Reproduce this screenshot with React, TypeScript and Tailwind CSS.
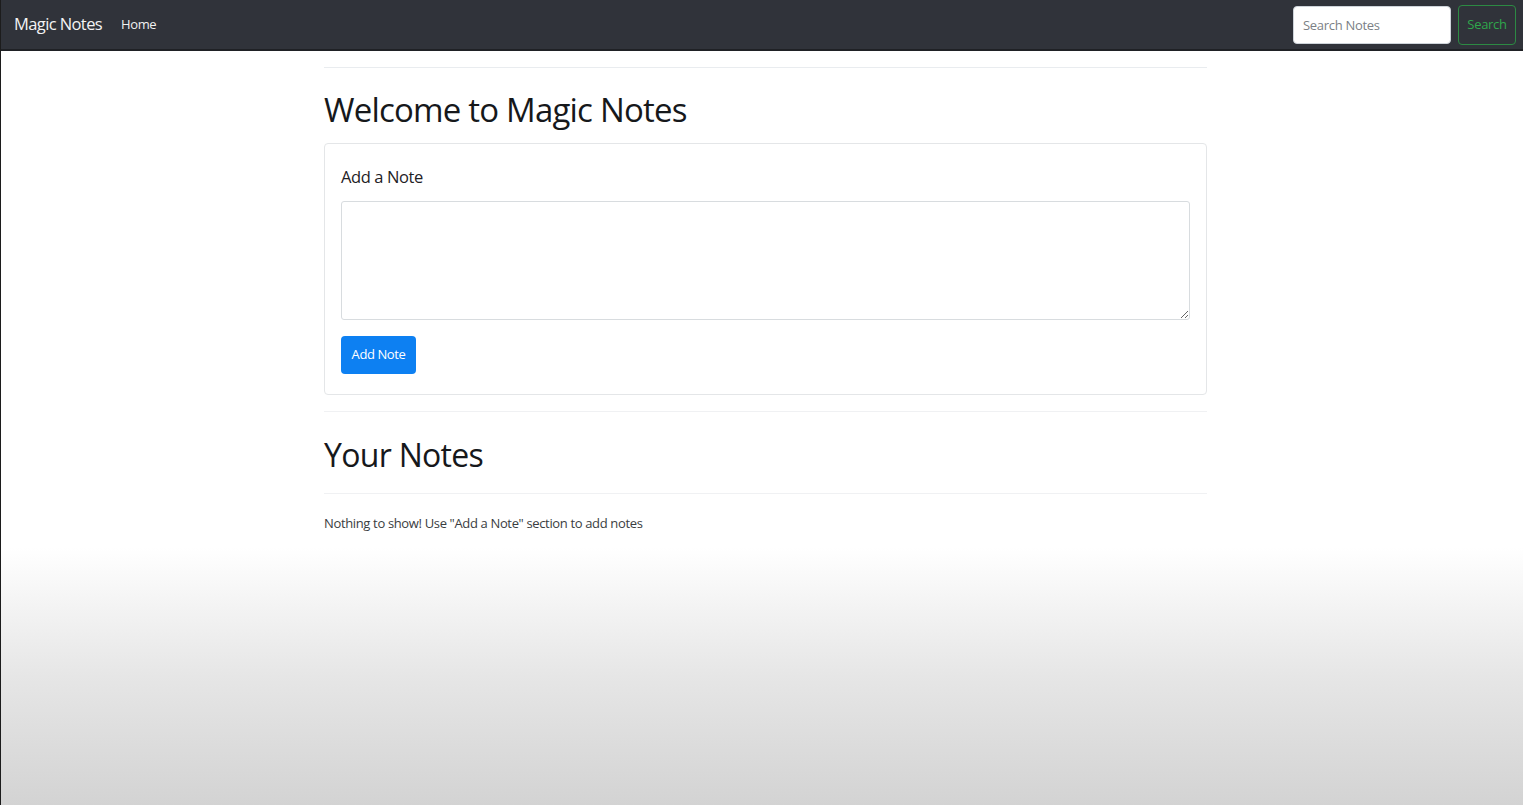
import React from 'react';

export default function App() {
    return (
        <div
            className="h-[805px] overflow-hidden border-l border-[#1c1c1c] bg-[linear-gradient(to_bottom,#ffffff_68%,#e6e6e6_84%,#d3d3d3_100%)] text-[#212529]"
            style={{ fontFamily: '"Open Sans", "Noto Sans", sans-serif' }}
        >
            <nav className="flex h-[51px] items-center justify-between border-b-2 border-[#1f2125] bg-[#30333a] pl-[13px] pr-[7px]">
                <div className="flex items-center">
                    <span className="text-[16.5px] tracking-[-0.6px] text-[#f4f4f4]">Magic Notes</span>
                    <span className="ml-[19px] text-[13px] tracking-[-0.4px] text-[#f0f0f0]">Home</span>
                </div>
                <div className="flex items-center gap-[7px]">
                    <input
                        placeholder="Search Notes"
                        className="h-[38px] w-[158px] rounded-[4px] border border-[#ced4da] bg-white px-[9px] text-[13px] tracking-[-0.3px] text-[#495057] outline-none placeholder:text-[#7b7f85]"
                    />
                    <button className="h-[40px] w-[58px] rounded-[4px] border border-[#2c8a43] text-[13px] tracking-[-0.3px] text-[#2fa74c]">
                        Search
                    </button>
                </div>
            </nav>

            <main className="mt-[16px] ml-[323px] w-[883px]">
                <hr className="border-t border-[#e9ecef]" />
                <h1 className="mt-[19px] text-[33px] leading-[46px] tracking-[-0.8px] text-[#16181b]">Welcome to Magic Notes</h1>

                <div className="mt-[10px] rounded-[4px] border border-[#e4e6e8] px-[16px] pt-[20px] pb-[20px]">
                    <h5 className="text-[16.5px] leading-[26px] tracking-[-0.4px] text-[#1e2125]">Add a Note</h5>
                    <textarea className="mt-[11px] block h-[119px] w-full rounded-[3px] border border-[#d8dcdf] p-2 text-[14px] outline-none" />
                    <button className="mt-[16px] h-[38px] w-[75px] rounded-[4px] bg-[#0d80f2] text-[13px] tracking-[-0.4px] text-white">
                        Add Note
                    </button>
                </div>

                <hr className="mt-[16px] border-t border-[#f0f1f3]" />
                <h1 className="mt-[21px] text-[32px] leading-[44px] tracking-[-0.7px] text-[#16181b]">Your Notes</h1>
                <hr className="mt-[16px] border-t border-[#f0f1f3]" />
                <p className="mt-[20px] text-[13px] tracking-[-0.35px] text-[#3a3d41]">
                    Nothing to show! Use "Add a Note" section to add notes
                </p>
            </main>
        </div>
    );
}
